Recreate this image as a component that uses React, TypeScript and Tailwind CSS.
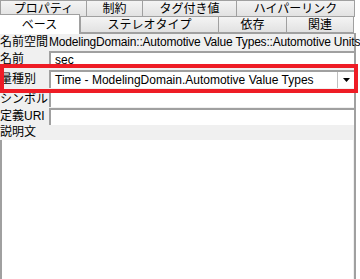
import React from "react";

const font = { fontFamily: '"Liberation Sans", "Noto Sans CJK JP", sans-serif' };

function Tab({ label, w, cls = "" }: { label: string; w: string; cls?: string }) {
  return (
    <div
      className={`${w} h-[17px] shrink-0 flex items-center justify-center border border-[#a0a0a0] bg-gradient-to-b from-[#f4f4f4] to-[#e2e2e2] text-[12px] leading-none text-black ${cls}`}
    >
      {label}
    </div>
  );
}

function Field({ children, h = "h-[16px]" }: { children?: React.ReactNode; h?: string }) {
  return (
    <div
      className={`flex-1 ${h} bg-white border-t-2 border-l-2 border-t-[#a0a0a0] border-l-[#a0a0a0] flex items-center px-1 text-[12px] leading-none`}
    >
      {children}
    </div>
  );
}

export default function App() {
  return (
    <div className="w-[360px] h-[279px] bg-white overflow-hidden relative text-black" style={font}>
      <div className="flex">
        <Tab label="プロパティ" w="w-[87px]" />
        <Tab label="制約" w="w-[57px]" cls="-ml-px" />
        <Tab label="タグ付き値" w="w-[95px]" cls="-ml-px" />
        <Tab label="ハイパーリンク" w="w-[119px]" cls="-ml-px" />
      </div>
      <div className="flex h-[16px]">
        <div className="w-[80px]" />
        <Tab label="ステレオタイプ" w="w-[139px]" cls="-mt-px" />
        <Tab label="依存" w="w-[69px]" cls="-ml-px -mt-px" />
        <Tab label="関連" w="w-[68px]" cls="-ml-px -mt-px" />
      </div>
      <div className="absolute left-0 top-[14px] w-[80px] h-[20px] bg-white border-t border-r border-[#a0a0a0] flex items-center justify-center text-[12px] leading-none z-10">
        ベース
      </div>
      <div className="w-[356px] h-[246px] bg-[#f0f0f0] border-r-2 border-r-[#a0a0a0] border-t border-t-[#a0a0a0] flex flex-col">
        <div className="flex items-center h-[16px]">
          <div className="w-[49px] shrink-0 text-[12px] leading-none whitespace-nowrap">名前空間</div>
          <div className="text-[12px] leading-none whitespace-nowrap tracking-[-0.2px]">ModelingDomain::Automotive Value Types::Automotive Units</div>
        </div>
        <div className="flex items-center h-[17px]">
          <div className="w-[49px] shrink-0 text-[12px] leading-none">名前</div>
          <Field>sec</Field>
        </div>
        <div className="flex items-center h-[24px]">
          <div className="w-[49px] shrink-0 text-[12px] leading-none">量種別</div>
          <div className="flex-1 h-[18px] bg-white border-t-2 border-l-2 border-t-[#a0a0a0] border-l-[#a0a0a0] flex items-center text-[12px] leading-none">
            <div className="flex-1 pl-1 whitespace-nowrap">Time - ModelingDomain.Automotive Value Types</div>
            <div className="w-[17px] h-full border-l border-[#c0c0c0] flex items-center justify-center">
              <svg width="7" height="4" viewBox="0 0 7 4"><path d="M0 0h7L3.5 4z" fill="#000" /></svg>
            </div>
          </div>
        </div>
        <div className="flex items-center h-[16px]">
          <div className="w-[49px] shrink-0 text-[12px] leading-none">シンボル</div>
          <Field />
        </div>
        <div className="flex items-center h-[18px]">
          <div className="w-[49px] shrink-0 text-[12px] leading-none">定義URI</div>
          <Field h="h-[17px]" />
        </div>
        <div className="h-[15px] text-[12px] leading-[15px]">説明文</div>
        <div className="flex-1 bg-white border-l-2 border-l-[#a0a0a0] mr-px" />
      </div>
      <div className="absolute left-0 top-[64px] w-[358px] h-[29px] border-4 border-[#ee1c25] pointer-events-none z-20" />
    </div>
  );
}
